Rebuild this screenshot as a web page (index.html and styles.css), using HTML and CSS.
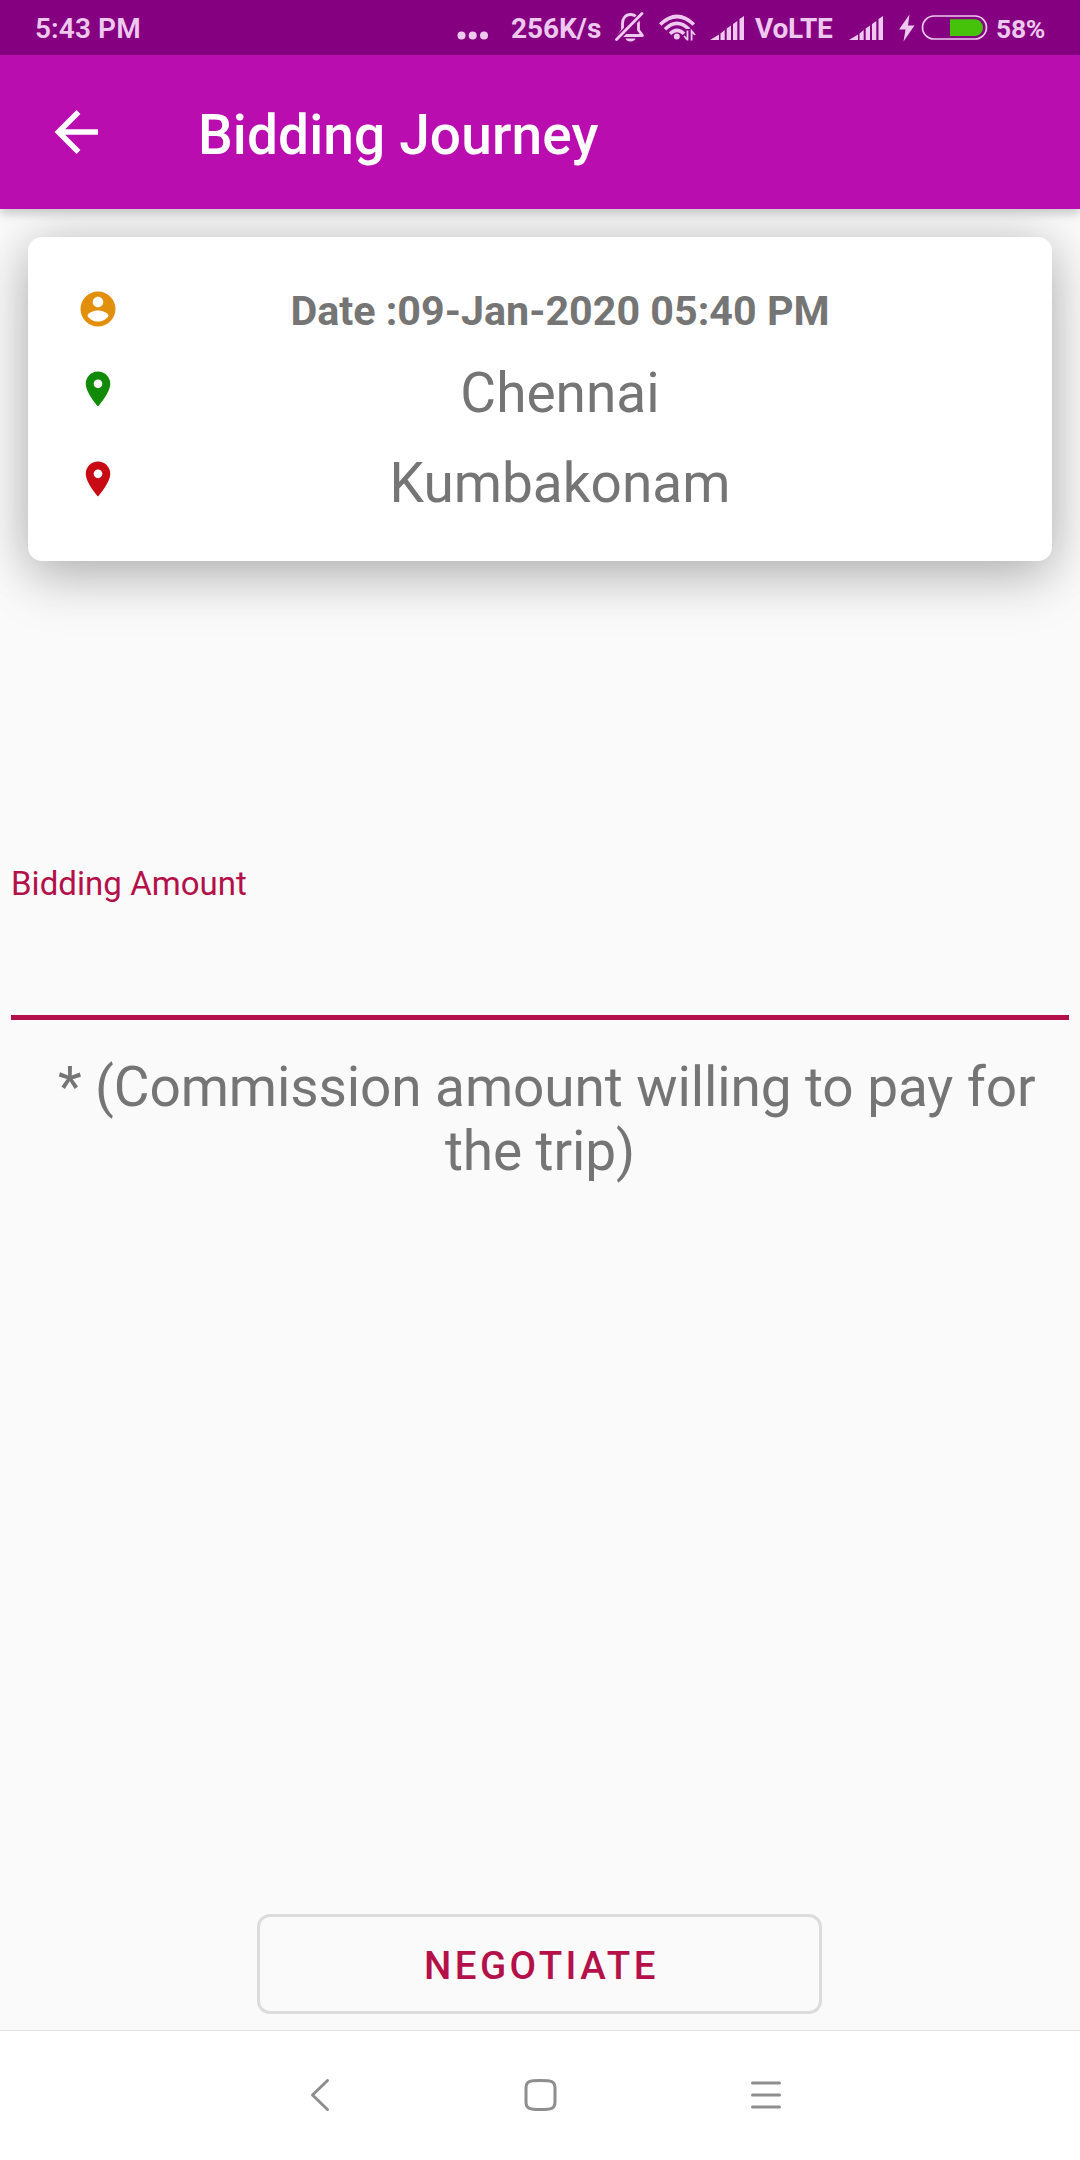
FILE: index.html
```html
<!DOCTYPE html>
<html lang="en">
<head>
<meta charset="utf-8">
<title>Bidding Journey</title>
<link rel="stylesheet" href="styles.css">
</head>
<body>
<div class="screen">
  <header class="status">
    <span class="time">5:43 PM</span>
    <svg class="dots" width="32" height="55" viewBox="0 0 32 55"><circle cx="4.500" cy="35.500" r="4"/><circle cx="15.700" cy="35.500" r="4"/><circle cx="27" cy="35.500" r="4"/></svg>
    <span class="speed">256K/s</span>
    <svg class="bell" width="30" height="55" viewBox="0 0 30 55">
      <path d="M4.500 35.500H27.500L23.500 30V23.500C23.500 18.500 20.500 14.500 15.500 14.500S7.500 18.500 7.500 23.500V30L3.500 35.500Z" fill="none" stroke="#efc8ef" stroke-width="2.800" stroke-linejoin="round"/>
      <path d="M10.500 38.500H20.500Q19.500 41.500 15.500 41.500T10.500 38.500Z"/>
      <path d="M0 41L29 12" stroke="#850080" stroke-width="6"/>
      <path d="M1.500 39.500L27 13.500" stroke="#efc8ef" stroke-width="2.800" stroke-linecap="round"/>
    </svg>
    <svg class="wifi" width="38" height="55" viewBox="0 0 38 55">
      <g fill="none" stroke="#efc8ef" stroke-width="3.600"><path d="M1.200 24.500Q18 8.500 34.800 24.500"/><path d="M6 29.200Q18 17.500 30 29.200"/><path d="M11 33.700Q18 27 25 33.700"/></g>
      <circle cx="17.800" cy="36.500" r="3"/>
      <path d="M27 29H31V41H27Z" fill="#850080"/>
      <path d="M28.500 30.500V40.500M25 36L28.500 40M32.600 40.500V31L36 35" fill="none" stroke="#efc8ef" stroke-width="1.800"/>
    </svg>
    <svg class="signal first" width="34" height="55" viewBox="0 0 34 55"><path d="M0 40L9 34.500V40ZM10.500 33.500L14.700 30V40H10.500ZM16.700 28.500L21 25.500V40H16.700ZM23 24L27.300 21V40H23ZM29.500 19L34 16V40H29.500Z"/></svg>
    <span class="volte">VoLTE</span>
    <svg class="signal second" width="34" height="55" viewBox="0 0 34 55"><path d="M0 40L9 34.500V40ZM10.500 33.500L14.700 30V40H10.500ZM16.700 28.500L21 25.500V40H16.700ZM23 24L27.300 21V40H23ZM29.500 19L34 16V40H29.500Z"/></svg>
    <svg class="bolt" width="16" height="55" viewBox="0 0 16 55"><path d="M10.500 14.500L0 29.500H6.500L4.500 41.500L15.500 25.500H9Z"/></svg>
    <svg class="battery" width="67" height="55" viewBox="0 0 67 55">
      <rect x="1.500" y="16" width="64" height="23" rx="11.500" fill="none" stroke="#efc8ef" stroke-width="1.700"/>
      <path d="M29 19.300H54.500A8.400 8.400 0 0 1 54.500 36H29Z" fill="#47c20a"/>
    </svg>
    <span class="percent">58%</span>
  </header>

  <div class="toolbar">
    <svg class="back" width="46" height="46" viewBox="0 0 46 46"><path d="M44 23H5M24.500 3L4.500 23L24.500 43" fill="none" stroke="#fff" stroke-width="5.500"/></svg>
    <h1 class="title">Bidding Journey</h1>
  </div>

  <main class="content">
    <section class="card">
      <div class="row date-row">
        <svg class="row-icon user" viewBox="0 0 24 24"><path d="M12 2C6.480 2 2 6.480 2 12s4.480 10 10 10 10-4.480 10-10S17.520 2 12 2zm0 3c1.660 0 3 1.340 3 3s-1.340 3-3 3-3-1.340-3-3 1.340-3 3-3zm0 14.200c-2.500 0-4.710-1.280-6-3.220.030-1.990 4-3.080 6-3.080 1.990 0 5.970 1.090 6 3.080-1.290 1.940-3.500 3.220-6 3.220z"/></svg>
        <span class="date">Date :09-Jan-2020 05:40 PM</span>
      </div>
      <div class="row">
        <svg class="row-icon from" viewBox="0 0 24 24"><path d="M12 2C8.130 2 5 5.130 5 9c0 5.250 7 13 7 13s7-7.750 7-13c0-3.870-3.130-7-7-7zm0 9.500c-1.380 0-2.500-1.120-2.500-2.500s1.120-2.500 2.500-2.500 2.500 1.120 2.500 2.500-1.120 2.500-2.500 2.500z"/></svg>
        <span class="place">Chennai</span>
      </div>
      <div class="row">
        <svg class="row-icon to" viewBox="0 0 24 24"><path d="M12 2C8.130 2 5 5.130 5 9c0 5.250 7 13 7 13s7-7.750 7-13c0-3.870-3.130-7-7-7zm0 9.500c-1.380 0-2.500-1.120-2.500-2.500s1.120-2.500 2.500-2.500 2.500 1.120 2.500 2.500-1.120 2.500-2.500 2.500z"/></svg>
        <span class="place">Kumbakonam</span>
      </div>
    </section>

    <div class="field"><label class="field-label">Bidding Amount</label></div>
    <p class="hint"> * (Commission amount willing to pay for the trip)</p>
    <button class="negotiate" type="button">NEGOTIATE</button>
  </main>

  <nav class="navbar">
    <svg width="225" height="46" viewBox="0 0 225 46"><path d="M124.500 8.500L109.500 23L124.500 37.500"/></svg>
    <svg width="225" height="46" viewBox="0 0 225 46"><path d="M112.500 8.500C123 8.500 127 9 127 16V30C127 37 123 37.500 112.500 37.500S98 37 98 30V16C98 9 102 8.500 112.500 8.500Z"/></svg>
    <svg width="225" height="46" viewBox="0 0 225 46"><path d="M99.500 11H126.500M99.500 23H126.500M99.500 35H126.500"/></svg>
  </nav>
</div>
</body>
</html>
```
FILE: styles.css
```css
* { box-sizing: border-box; }
body { margin: 0; font-family: Roboto, sans-serif; }
.screen { width: 1080px; height: 2160px; display: flex; flex-direction: column; background: #fafafa; overflow: hidden; }

.status { height: 55px; flex: none; display: flex; align-items: center; background: #850080; color: #efc8ef; fill: #efc8ef; font-size: 28px; font-weight: 700; line-height: 57px; white-space: nowrap; position: relative; z-index: 2; }
.status svg { flex: none; display: block; }
.status span { flex: none; padding-top: 1px; }
.status .time { width: 422px; padding-left: 35px; font-weight: 600; letter-spacing: .1px; }
.dots { margin-left: 35px; }
.speed { width: 91px; margin-left: 22px; letter-spacing: -.1px; }
.bell { margin-left: 13px; }
.wifi { margin-left: 14px; }
.signal.first { margin-left: 13px; }
.volte { width: 80px; margin-left: 11px; letter-spacing: -.2px; }
.signal.second { margin-left: 14px; }
.bolt { margin-left: 16px; }
.battery { margin-left: 6px; }
.percent { margin-left: 8px; font-size: 26.500px; letter-spacing: -.3px; }

.toolbar { height: 154px; flex: none; display: flex; align-items: center; background: #b90daf; padding-left: 54px; position: relative; z-index: 1; box-shadow: 0 4px 10px rgba(0, 0, 0, .22); }
.title { margin: 6px 0 0 98px; color: #fff; font-size: 55px; font-weight: 500; line-height: 64px; letter-spacing: .12px; white-space: nowrap; }

.content { height: 1821px; flex: none; display: flex; flex-direction: column; align-items: center; }
.card { width: 1024px; height: 324px; flex: none; margin-top: 28px; padding: 37px 28px; border-radius: 14px; background: #fff; box-shadow: 0 26px 54px rgba(0, 0, 0, .12), 0 4px 50px rgba(0, 0, 0, .23); }
.row { height: 90px; display: flex; align-items: center; }
.date-row { height: 70px; }
.row-icon { width: 42px; height: 42px; margin: 0 21px 0 21px; flex: none; }
.user { fill: #e28f0c; }
.from { fill: #118a07; }
.to { fill: #c70a13; }
.date, .place { width: 840px; text-align: center; color: #757575; white-space: nowrap; }
.date { padding-top: 3px; font-size: 41.250px; font-weight: 700; line-height: 48px; }
.place { padding-top: 8px; font-size: 55px; line-height: 64px; }

.field { width: 1058px; height: 157px; flex: none; margin-top: 302px; border-bottom: 5px solid #b4114a; }
.field-label { display: block; color: #b4114a; font-size: 33px; line-height: 42px; letter-spacing: .05px; }
.hint { width: 1058px; margin: 35px 0 0; text-align: center; white-space: pre-wrap; color: #757575; font-size: 55px; line-height: 64.400px; letter-spacing: -.11px; }
.negotiate { width: 565px; height: 100px; flex: none; margin: auto 1px 16px 0; padding: 4px 0 0 4px; border: 3px solid #dcdcdc; border-radius: 13px; background: transparent; color: #b4114a; font: 500 38.500px/46px Roboto, sans-serif; letter-spacing: 3.440px; }

.navbar { height: 130px; flex: none; display: flex; justify-content: center; align-items: center; padding-bottom: 1px; background: #fff; border-top: 1px solid #e2e2e2; }
.navbar svg { fill: none; stroke: #8e8e8e; stroke-width: 3; stroke-linecap: round; stroke-linejoin: round; }
```
